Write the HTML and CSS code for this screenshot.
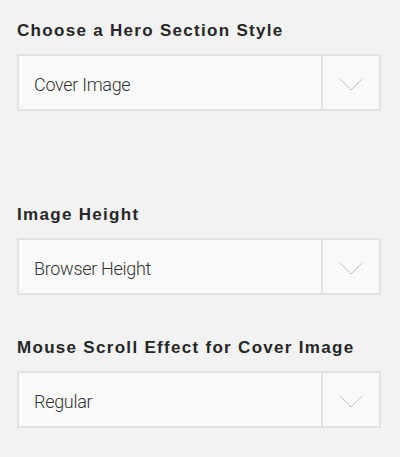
FILE: index.html
```html
<!DOCTYPE html>
<html>
<head>
<meta charset="utf-8">
<link rel="stylesheet" href="styles.css">
</head>
<body>
<div class="panel">
  <div class="field field-first">
    <div class="label">Choose a Hero Section Style</div>
    <div class="select">
      <div class="value">Cover Image</div>
      <div class="arrow"><svg width="24" height="13" viewBox="0 0 24 13"><polyline points="0.5,0.5 12,12 23.5,0.5" fill="none" stroke="#c2c2c2" stroke-width="1"/></svg></div>
    </div>
  </div>
  <div class="field">
    <div class="label">Image Height</div>
    <div class="select">
      <div class="value">Browser Height</div>
      <div class="arrow"><svg width="24" height="13" viewBox="0 0 24 13"><polyline points="0.5,0.5 12,12 23.5,0.5" fill="none" stroke="#c2c2c2" stroke-width="1"/></svg></div>
    </div>
  </div>
  <div class="field">
    <div class="label">Mouse Scroll Effect for Cover Image</div>
    <div class="select">
      <div class="value">Regular</div>
      <div class="arrow"><svg width="24" height="13" viewBox="0 0 24 13"><polyline points="0.5,0.5 12,12 23.5,0.5" fill="none" stroke="#c2c2c2" stroke-width="1"/></svg></div>
    </div>
  </div>
</div>
</body>
</html>
```
FILE: styles.css
```css
html, body {
  margin: 0;
  padding: 0;
  background: #f2f2f2;
}
.panel {
  padding: 21px 19px 0 17px;
  display: flex;
  flex-direction: column;
}
.field {
  display: flex;
  flex-direction: column;
  gap: 13px;
  margin-bottom: 43px;
}
.field-first {
  margin-bottom: 94px;
}
.label {
  font-family: "Liberation Sans", Arial, sans-serif;
  font-weight: bold;
  font-size: 17px;
  line-height: 20px;
  letter-spacing: 1.3px;
  color: #262626;
}
.select {
  box-sizing: border-box;
  height: 57px;
  border: 2px solid #e2e2e2;
  background: #f9f9f9;
  display: flex;
}
.value {
  flex: 1;
  display: flex;
  align-items: center;
  padding: 3px 0 0 15px;
  font-family: Roboto, "Liberation Sans", sans-serif;
  font-weight: 300;
  font-size: 18px;
  letter-spacing: -0.3px;
  color: #333;
}
.arrow {
  width: 56px;
  border-left: 2px solid #e2e2e2;
  display: flex;
  align-items: center;
  justify-content: center;
  padding-top: 3px;
}
```
